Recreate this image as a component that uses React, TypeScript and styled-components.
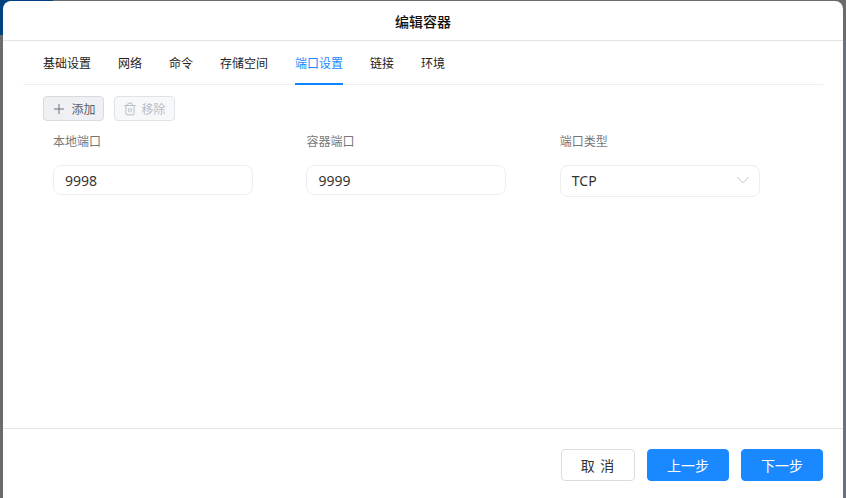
import styled, { createGlobalStyle } from 'styled-components';
import { Plus, Trash2, ChevronDown } from 'lucide-react';

const GlobalStyle = createGlobalStyle`
  html, body {
    margin: 0;
    height: 100%;
  }

  body {
    font-family: "Noto Sans", "Noto Sans CJK SC", sans-serif;
    overflow: hidden;
  }
`;

const tabs = ['基础设置', '网络', '命令', '存储空间', '端口设置', '链接', '环境'];

export default function App() {
  return (
    <>
      <GlobalStyle />
      <Backdrop>
        <Modal>
          <Header>编辑容器</Header>
          <TabBar>
            {tabs.map((tab) => (
              <Tab key={tab} $active={tab === '端口设置'}>
                {tab}
              </Tab>
            ))}
          </TabBar>
          <Body>
            <Toolbar>
              <ToolButton>
                <Plus size={16} strokeWidth={1.2} color="#50545c" />
                添加
              </ToolButton>
              <ToolButton $disabled>
                <Trash2 size={14} strokeWidth={1.7} />
                移除
              </ToolButton>
            </Toolbar>
            <FormGrid>
              <Field>
                <FieldLabel>本地端口</FieldLabel>
                <InputBox>9998</InputBox>
              </Field>
              <Field>
                <FieldLabel>容器端口</FieldLabel>
                <InputBox>9999</InputBox>
              </Field>
              <Field>
                <FieldLabel>端口类型</FieldLabel>
                <InputBox $select>
                  <span>TCP</span>
                  <ChevronDown size={22} strokeWidth={0.9} color="#b4b7bd" />
                </InputBox>
              </Field>
            </FormGrid>
          </Body>
          <Footer>
            <FooterButton $width={74} $spaced>取 消</FooterButton>
            <FooterButton $primary $width={82}>上一步</FooterButton>
            <FooterButton $primary $width={82}>下一步</FooterButton>
          </Footer>
        </Modal>
      </Backdrop>
    </>
  );
}

const Backdrop = styled.div`
  width: 846px;
  height: 498px;
  box-sizing: border-box;
  padding: 1px 3px 0;
  background:
    linear-gradient(#00417f, #00417f) 0 0 / 53px 35px no-repeat,
    linear-gradient(#6b6b6b, #6b6b6b) 0 0 / 100% 40px no-repeat,
    linear-gradient(to right, #6b6b6b 50%, #68717c 50%);
`;

const Modal = styled.div`
  height: 497px;
  background: #fff;
  border-radius: 8px 8px 0 0;
  display: flex;
  flex-direction: column;
`;

const Header = styled.div`
  height: 39px;
  flex-shrink: 0;
  display: flex;
  align-items: center;
  justify-content: center;
  border-bottom: 1px solid #e4e4e4;
  font-size: 14px;
  font-weight: 500;
  color: #111111;
`;

const TabBar = styled.div`
  height: 44px;
  box-sizing: border-box;
  flex-shrink: 0;
  margin: 0 20px;
  padding: 0 20px;
  display: flex;
  gap: 27px;
  border-bottom: 1px solid #eeeeee;
`;

const Tab = styled.div<{ $active?: boolean }>`
  height: 44px;
  box-sizing: border-box;
  padding-top: 2px;
  display: flex;
  align-items: center;
  font-size: 12px;
  color: ${(p) => (p.$active ? '#1a88ff' : '#222222')};
  border-bottom: 2px solid ${(p) => (p.$active ? '#0a84ff' : 'transparent')};
`;

const Body = styled.div`
  flex: 1;
  padding: 11px 20px 0 40px;
`;

const Toolbar = styled.div`
  display: flex;
  gap: 10px;
`;

const ToolButton = styled.div<{ $disabled?: boolean }>`
  width: 61px;
  height: 25px;
  box-sizing: border-box;
  display: flex;
  align-items: center;
  justify-content: center;
  gap: 4px;
  font-size: 12px;
  border-radius: 4px;
  border: 1px solid ${(p) => (p.$disabled ? '#dfe3e9' : '#d8dade')};
  background: ${(p) => (p.$disabled ? '#f7f8fa' : '#eff0f3')};
  color: ${(p) => (p.$disabled ? '#b6bcc8' : '#5a5e66')};
`;

const FormGrid = styled.div`
  display: grid;
  grid-template-columns: repeat(3, 200px);
  column-gap: 53.4px;
  margin: 11px 0 0 10px;
`;

const Field = styled.div`
  display: flex;
  flex-direction: column;
`;

const FieldLabel = styled.div`
  height: 20px;
  line-height: 20px;
  margin-bottom: 13px;
  font-size: 12px;
  color: #777777;
`;

const InputBox = styled.div<{ $select?: boolean }>`
  width: 200px;
  height: ${(p) => (p.$select ? 32 : 30)}px;
  box-sizing: border-box;
  padding: 0 5px ${(p) => (p.$select ? 2 : 0)}px 11px;
  display: flex;
  align-items: center;
  justify-content: space-between;
  font-size: 14px;
  color: #333333;
  background: #fff;
  border: 1px solid #eeeeee;
  border-radius: 8px;
`;

const Footer = styled.div`
  height: 70px;
  flex-shrink: 0;
  box-sizing: border-box;
  padding: 20px 20px 0 0;
  display: flex;
  justify-content: flex-end;
  gap: 12px;
  border-top: 1px solid #e4e4e4;
`;

const FooterButton = styled.div<{ $primary?: boolean; $spaced?: boolean; $width: number }>`
  width: ${(p) => p.$width}px;
  height: 32px;
  box-sizing: border-box;
  display: flex;
  align-items: center;
  justify-content: center;
  font-size: 14px;
  letter-spacing: ${(p) => (p.$spaced ? '1px' : '0')};
  border-radius: 4px;
  color: ${(p) => (p.$primary ? '#ffffff' : '#333333')};
  background: ${(p) => (p.$primary ? '#1a88ff' : '#ffffff')};
  border: 1px solid ${(p) => (p.$primary ? '#1a88ff' : '#dcdcdc')};
`;
